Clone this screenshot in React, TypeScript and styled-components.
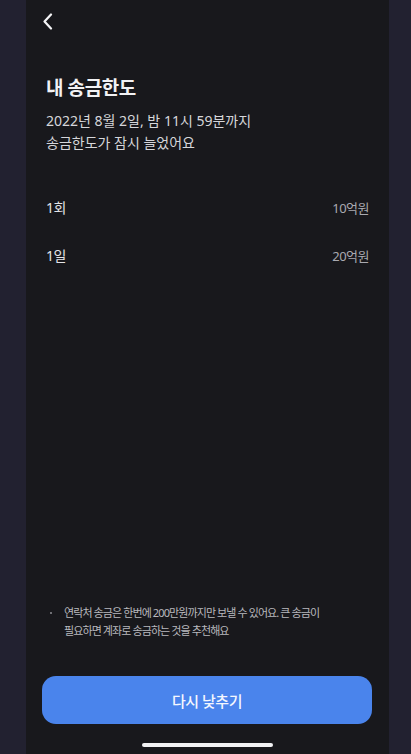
import * as React from 'react';
import styled, { createGlobalStyle } from 'styled-components';

const fontStack = `"Noto Sans", "Noto Sans CJK KR", sans-serif`;

const GlobalStyle = createGlobalStyle`
  html, body {
    margin: 0;
    padding: 0;
    background: #222130;
  }
  body {
    font-family: ${fontStack};
  }
`;

type LimitRow = {
  label: string;
  value: string;
};

const limits: LimitRow[] = [
  { label: '1회', value: '10억원' },
  { label: '1일', value: '20억원' },
];

export default function App() {
  return (
    <>
      <GlobalStyle />
      <Screen>
        <Panel>
          <Header>
            <BackButton aria-label="뒤로">
              <svg width="11" height="17" viewBox="0 0 11 17" fill="none">
                <path d="M9 1.5L2.5 8.5L9 15.5" stroke="#f4f4f6" strokeWidth="2.2" strokeLinecap="round" strokeLinejoin="round" />
              </svg>
            </BackButton>
          </Header>

          <Title>내 송금한도</Title>
          <Subtitle>
            2022년 8월 2일, 밤 11시 59분까지
            <br />
            송금한도가 잠시 늘었어요
          </Subtitle>

          <LimitList>
            {limits.map((row) => (
              <LimitItem key={row.label}>
                <LimitLabel>{row.label}</LimitLabel>
                <LimitValue>{row.value}</LimitValue>
              </LimitItem>
            ))}
          </LimitList>

          <Spacer />

          <Note>
            <Bullet />
            <NoteText>
              연락처 송금은 한번에 200만원까지만 보낼 수 있어요. 큰 송금이
              <br />
              필요하면 계좌로 송금하는 것을 추천해요
            </NoteText>
          </Note>

          <PrimaryButton>다시 낮추기</PrimaryButton>

          <HomeArea>
            <HomeBar />
          </HomeArea>
        </Panel>
      </Screen>
    </>
  );
}

const Screen = styled.div`
  display: flex;
  width: 411px;
  height: 754px;
  background: #222130;
  overflow: hidden;
`;

const Panel = styled.main`
  display: flex;
  flex-direction: column;
  width: 363px;
  height: 754px;
  margin-left: 26px;
  background: #18181c;
`;

const Header = styled.header`
  display: flex;
  align-items: center;
  height: 42px;
  padding-left: 16px;
`;

const BackButton = styled.button`
  display: flex;
  align-items: center;
  justify-content: center;
  padding: 0;
  border: 0;
  background: none;
  cursor: pointer;
`;

const Title = styled.h1`
  margin: 34px 0 0 20px;
  font-size: 19px;
  line-height: 24px;
  font-weight: 700;
  letter-spacing: -0.4px;
  color: #f2f2f4;
`;

const Subtitle = styled.p`
  margin: 10px 0 0 20px;
  font-size: 14px;
  line-height: 22px;
  font-weight: 400;
  letter-spacing: 0;
  color: #d6d6da;
`;

const LimitList = styled.ul`
  list-style: none;
  margin: 29px 0 0;
  padding: 0 20px;
`;

const LimitItem = styled.li`
  display: flex;
  align-items: center;
  justify-content: space-between;
  height: 48px;
`;

const LimitLabel = styled.span`
  font-size: 14px;
  letter-spacing: -0.5px;
  color: #e4e4e8;
`;

const LimitValue = styled.span`
  font-size: 13px;
  letter-spacing: -0.5px;
  color: #a9a9b0;
`;

const Spacer = styled.div`
  flex: 1;
`;

const Note = styled.div`
  display: flex;
  align-items: flex-start;
  gap: 12px;
  padding-left: 24px;
`;

const Bullet = styled.span`
  flex: none;
  width: 2px;
  height: 2px;
  margin-top: 8px;
  border-radius: 50%;
  background: #8c8c92;
`;

const NoteText = styled.p`
  margin: 0;
  font-size: 11px;
  line-height: 18px;
  letter-spacing: -0.9px;
  color: #b9b9be;
`;

const PrimaryButton = styled.button`
  display: flex;
  align-items: center;
  justify-content: center;
  height: 48px;
  margin: 36px 17px 0 16px;
  border: 0;
  border-radius: 14px;
  background: #4a84ec;
  font-family: ${fontStack};
  font-size: 15px;
  font-weight: 500;
  letter-spacing: -0.5px;
  color: #f4f7fe;
  cursor: pointer;
`;

const HomeArea = styled.div`
  display: flex;
  justify-content: center;
  height: 30px;
`;

const HomeBar = styled.div`
  width: 131px;
  height: 4px;
  margin-top: 19px;
  border-radius: 3px;
  background: #f2f2f4;
`;
